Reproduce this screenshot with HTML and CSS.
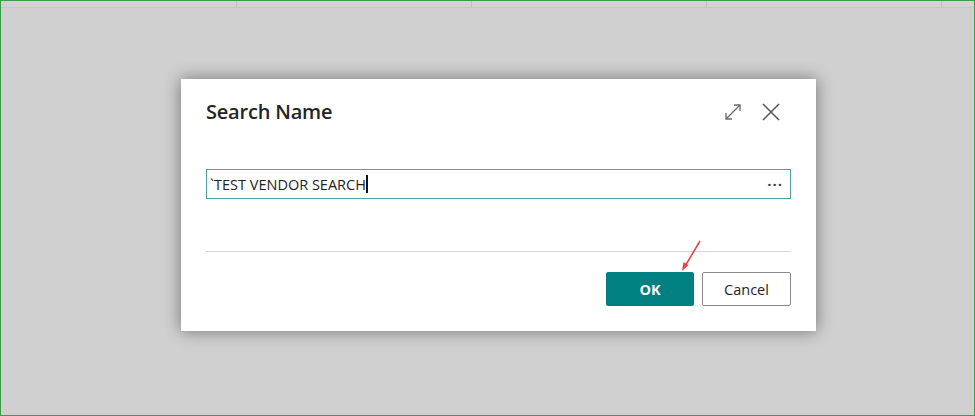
FILE: index.html
```html
<!DOCTYPE html>
<html>
<head>
<meta charset="utf-8">
<link rel="stylesheet" href="styles.css">
</head>
<body>
<div class="page">
  <div class="topband">
    <div class="col"></div><div class="col"></div><div class="col"></div><div class="col"></div><div class="col last"></div>
  </div>
  <div class="stage">
    <div class="dialog">
      <div class="header">
        <h1 class="title">Search Name</h1>
        <div class="tools">
          <svg class="icon" width="20" height="20" viewBox="0 0 20 20"><path d="M3 17L17 3M11 3h6v6M3 11v6h6" fill="none" stroke="#6a6a6a" stroke-width="1.3"/></svg>
          <svg class="icon" width="20" height="20" viewBox="0 0 20 20"><path d="M2 2L18 18M18 2L2 18" fill="none" stroke="#555" stroke-width="1.5"/></svg>
        </div>
      </div>
      <div class="field">
        <span class="value">`TEST VENDOR SEARCH</span><span class="caret"></span>
        <span class="more">···</span>
      </div>
      <div class="sep"></div>
      <div class="actions">
        <button class="btn ok">OK</button>
        <button class="btn cancel">Cancel</button>
      </div>
    </div>
  </div>
  <svg class="arrow" width="40" height="40" viewBox="0 0 40 40"><path d="M19 1L3 28" stroke="#e0474c" stroke-width="1.6" fill="none"/><path d="M1 31L2.5 22L7.5 25Z" fill="#e0474c"/></svg>
</div>
</body>
</html>
```
FILE: styles.css
```css
*{box-sizing:border-box;}
html,body{margin:0;padding:0;}
body{width:975px;height:416px;overflow:hidden;font-family:"Open Sans","Noto Sans",sans-serif;}
.page{position:relative;width:975px;height:416px;border:1px solid #3f9a48;background:#d0d0d0;display:flex;flex-direction:column;}
.topband{height:7px;display:flex;border-bottom:1px solid #c6c6c6;background:#d3d3d3;}
.col{width:235px;border-right:1px solid #bdbdbd;}
.col:first-child{width:236px;}
.col.last{flex:1;border-right:none;}
.stage{flex:1;padding:71px 0 0 180px;}
.dialog{width:635px;height:252px;background:#fff;box-shadow:0 0 16px rgba(0,0,0,.45);padding:0 25px;display:flex;flex-direction:column;}
.header{display:flex;align-items:center;justify-content:space-between;height:66px;padding-bottom:1px;}
.title{margin:0;font-size:20px;font-weight:600;color:#242424;letter-spacing:-0.2px;}
.tools{display:flex;gap:18px;margin-right:10px;}
.icon{display:block;}
.field{margin-top:24px;height:30px;border:1px solid #4fa6a6;display:flex;align-items:center;padding:0 4px 0 3px;font-size:14.5px;color:#222;}
.value{letter-spacing:0;}
.caret{display:inline-block;width:2px;height:18px;background:#111;margin-left:0px;}
.more{margin-left:auto;color:#444;font-size:15px;font-weight:700;letter-spacing:1px;margin-right:3px;}
.sep{margin-top:52px;border-top:1px solid #d6d6d6;}
.actions{display:flex;justify-content:flex-end;gap:8px;margin-top:20px;}
.btn{height:34px;font-family:inherit;font-size:14.5px;border-radius:2px;cursor:pointer;}
.ok{width:88px;background:#008080;color:#fff;border:none;font-weight:700;}
.cancel{width:89px;background:#fff;color:#242424;border:1px solid #8a8a8a;font-weight:400;}
.arrow{position:absolute;left:680px;top:239px;}
```
